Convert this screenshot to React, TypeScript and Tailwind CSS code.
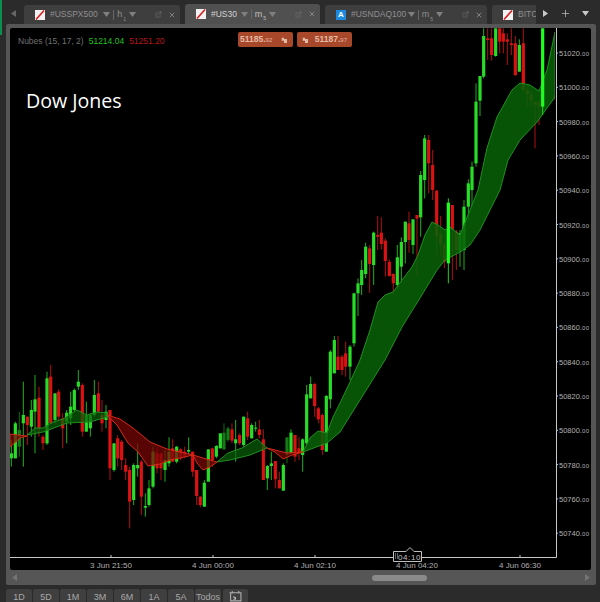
import React from "react";
import { ExternalLink, X, Plus } from "lucide-react";

type Row = [number, number, number, number, number, string];
const conv = (ox: number, oy: number, s: number, rows: Row[]) =>
  rows.map(([x, a, b, c, d, k]) => ({ x: ox + x / s, wt: oy + a / s, bt: oy + b / s, bb: oy + c / s, wb: oy + d / s, k }));

const candles = [
  ...conv(0, 360, 3, [
    [34, 240, 280, 295, 320, "G"], [46, 185, 190, 295, 295, "G"], [58, 155, 210, 260, 290, "D"], [70, 65, 165, 190, 320, "G"],
    [82, 170, 170, 195, 255, "R"], [94, 120, 150, 200, 230, "G"], [105, 45, 118, 155, 280, "G"], [117, 80, 113, 205, 230, "R"],
    [129, 225, 230, 250, 270, "R"], [141, 35, 55, 250, 255, "G"], [152, 15, 50, 190, 190, "R"], [165, 100, 100, 180, 190, "G"],
    [176, 88, 95, 170, 180, "R"], [188, 160, 175, 205, 265, "R"], [200, 150, 158, 185, 250, "G"], [212, 95, 140, 175, 195, "G"],
    [223, 85, 90, 150, 155, "G"], [235, 30, 65, 80, 90, "G"], [247, 70, 75, 215, 230, "R"], [259, 125, 165, 215, 215, "G"],
    [271, 160, 165, 205, 230, "G"], [283, 60, 105, 165, 170, "G"], [295, 65, 100, 155, 160, "R"], [306, 120, 165, 190, 215, "R"],
    [318, 135, 155, 180, 205, "G"], [330, 150, 150, 325, 360, "R"], [342, 250, 250, 330, 335, "G"], [353, 225, 235, 295, 320, "R"],
    [365, 240, 245, 300, 330, "R"], [377, 295, 315, 335, 360, "R"], [389, 320, 330, 425, 505, "R"], [401, 310, 315, 420, 435, "G"],
    [413, 250, 315, 325, 350, "G"], [424, 300, 305, 410, 465, "R"], [436, 400, 438, 443, 470, "G"], [447, 360, 385, 435, 440, "G"],
    [459, 260, 275, 380, 385, "G"], [471, 265, 280, 325, 340, "R"], [483, 280, 280, 325, 360, "R"], [495, 270, 300, 330, 365, "G"],
    [507, 232, 275, 310, 320, "G"],
  ]),
  ...conv(170, 360, 3, [
    [8, 238, 265, 305, 305, "R"], [20, 258, 260, 305, 310, "G"], [32, 265, 268, 295, 300, "R"], [44, 260, 275, 290, 295, "R"],
    [56, 232, 270, 275, 285, "G"], [68, 275, 275, 335, 350, "R"], [80, 330, 330, 408, 435, "R"], [91, 408, 410, 435, 442, "R"],
    [103, 360, 368, 440, 440, "G"], [115, 268, 268, 365, 365, "G"], [127, 263, 265, 300, 320, "R"], [139, 255, 258, 290, 295, "G"],
    [151, 220, 220, 265, 265, "G"], [162, 190, 218, 268, 270, "D"], [174, 200, 205, 240, 245, "D"], [186, 190, 208, 242, 250, "R"],
    [197, 180, 238, 250, 305, "G"], [209, 220, 225, 250, 255, "R"], [221, 170, 170, 255, 260, "G"], [233, 155, 175, 230, 240, "R"],
    [245, 190, 195, 235, 235, "G"], [257, 185, 203, 205, 215, "G"], [268, 180, 208, 225, 235, "R"], [280, 208, 238, 360, 360, "R"],
    [292, 315, 318, 355, 390, "G"], [304, 275, 310, 318, 360, "G"], [316, 303, 303, 358, 385, "R"], [328, 335, 360, 385, 385, "R"],
    [340, 310, 315, 392, 392, "G"], [351, 232, 232, 285, 310, "D"], [363, 208, 218, 280, 280, "G"], [375, 225, 225, 290, 305, "R"],
    [387, 232, 265, 280, 300, "R"], [398, 235, 238, 285, 335, "G"], [410, 75, 103, 250, 255, "G"], [422, 50, 72, 115, 115, "G"],
    [434, 68, 72, 138, 170, "R"], [445, 140, 145, 178, 190, "R"], [457, 160, 165, 270, 285, "R"], [469, 105, 108, 275, 275, "G"],
    [481, -30, -25, 118, 145, "G"], [493, -72, -60, 40, 40, "G"], [504, -72, -10, 30, 30, "R"],
  ]),
  ...conv(330, 180, 3, [
    [36, 525, 530, 570, 585, "R"], [47, 485, 520, 560, 590, "R"], [60, 495, 500, 560, 600, "G"], [72, 338, 340, 490, 500, "G"],
    [84, 295, 310, 340, 408, "G"], [95, 240, 270, 315, 345, "G"], [107, 188, 200, 282, 295, "G"], [119, 195, 205, 252, 338, "R"],
    [131, 155, 158, 255, 315, "G"], [143, 108, 165, 170, 210, "R"], [154, 112, 158, 192, 208, "R"], [166, 175, 182, 243, 290, "R"],
    [178, 238, 245, 288, 290, "R"], [190, 280, 282, 310, 345, "R"], [202, 195, 232, 315, 325, "G"], [214, 172, 186, 260, 310, "G"],
    [226, 125, 125, 186, 250, "G"], [237, 95, 130, 180, 218, "R"], [249, 118, 118, 195, 222, "G"], [261, 105, 105, 116, 290, "R"],
    [272, -27, -15, 112, 170, "G"], [284, -135, -125, 0, 55, "G"], [296, -135, -120, -50, 40, "R"], [308, -90, -45, 30, 60, "R"],
    [320, 30, 32, 168, 225, "R"], [332, 108, 162, 190, 225, "R"], [343, 190, 192, 245, 265, "R"], [355, 55, 68, 250, 310, "B"],
    [367, 75, 75, 150, 300, "R"], [379, 150, 155, 210, 270, "R"], [390, 150, 160, 215, 260, "G"],
  ]),
  ...conv(440, 20, 3, [
    [72, 540, 560, 690, 750, "G"], [85, 478, 490, 560, 600, "G"], [96, 425, 440, 510, 560, "G"], [108, 190, 245, 430, 440, "G"],
    [120, 168, 168, 242, 288, "G"], [131, 25, 48, 170, 175, "G"], [143, 25, 55, 60, 120, "R"], [155, 25, 55, 105, 122, "R"],
    [167, 25, 25, 108, 110, "G"], [179, 25, 25, 65, 100, "R"], [190, 25, 40, 65, 100, "R"], [202, 40, 58, 65, 135, "R"],
    [214, 25, 70, 75, 105, "R"], [226, 48, 70, 165, 168, "R"], [238, 58, 75, 155, 155, "G"], [250, 25, 70, 210, 215, "R"],
    [262, 200, 212, 222, 260, "R"], [273, 212, 225, 242, 262, "R"], [285, 245, 245, 255, 385, "R"], [297, 245, 245, 258, 315, "R"],
    [308, 25, 25, 260, 285, "B"], [345, 225, 228, 235, 240, "R"],
  ]),
];

const colors: Record<string, [string, string]> = {
  G: ["#28dc28", "#1cb01c"],
  D: ["#147a14", "#0f6a0f"],
  B: ["#1fff1f", "#1fd01f"],
  R: ["#dc1212", "#b01010"],
};

const band = (upper: number[][], lower: number[][]) =>
  [...upper, ...[...lower].reverse()].map((p) => p.join(",")).join(" ");

const greenBands = [
  band(
    [[27, 435], [35, 428], [43, 428], [53, 422], [63, 419], [77, 410], [87, 415], [97, 412], [107, 413]],
    [[27, 435], [43, 432], [67, 423], [90, 422], [107, 417]]
  ),
  band(
    [[217, 462], [228, 453], [242, 448], [257, 439], [267, 448]],
    [[217, 462], [230, 460], [250, 455], [267, 448]]
  ),
  band(
    [[303, 452], [310, 438], [318, 431], [327, 433], [333, 417], [340, 403], [350, 382], [360, 360], [370, 330], [378, 302], [385, 295], [393, 292], [402, 280], [412, 267], [418, 255], [425, 235], [432, 222], [438, 225], [445, 230], [450, 227], [460, 235], [468, 215], [478, 190], [487, 148], [497, 117], [512, 90], [520, 83], [530, 85], [539, 91], [547, 70], [555, 32]],
    [[303, 452], [327, 443], [340, 432], [360, 400], [385, 360], [402, 327], [420, 298], [437, 270], [445, 260], [460, 252], [470, 245], [480, 230], [490, 210], [500, 190], [508, 160], [520, 140], [537, 122], [555, 97]]
  ),
];
const redBands = [
  band([[10, 434], [27, 436]], [[10, 447], [20, 438], [27, 436]]),
  band(
    [[107, 415], [120, 419], [133, 428], [150, 442], [167, 449], [193, 455], [203, 458], [217, 462]],
    [[107, 415], [117, 425], [128, 443], [138, 452], [148, 466], [160, 464], [170, 460], [180, 458], [193, 455], [197, 463], [203, 470], [210, 467], [217, 462]]
  ),
  band(
    [[267, 448], [287, 453], [303, 452]],
    [[267, 448], [275, 452], [283, 459], [292, 455], [303, 452]]
  ),
];

const prices = [51020, 51000, 50980, 50960, 50940, 50920, 50900, 50880, 50860, 50840, 50820, 50800, 50780, 50760, 50740];
const times: [number, string][] = [[111, "3 Jun 21:50"], [213, "4 Jun 00:00"], [315, "4 Jun 02:10"], [417, "4 Jun 04:20"], [520, "4 Jun 06:30"]];

function Candle({ c }: { c: (typeof candles)[number] }) {
  return (
    <g>
      <line x1={c.x} x2={c.x} y1={c.wt} y2={c.wb} stroke={colors[c.k][1]} strokeWidth="1" />
      <rect x={c.x - 1.6} y={c.bt} width="3.2" height={Math.max(c.bb - c.bt, 1)} fill={colors[c.k][0]} />
    </g>
  );
}

function Chart() {
  return (
    <svg viewBox="10 28 581 542" className="block w-[581px] h-[542px]" style={{ fontFamily: "'Liberation Sans', sans-serif" }}>
      <defs>
        <clipPath id="plot"><rect x="10" y="28" width="545" height="529" /></clipPath>
      </defs>
      <g clipPath="url(#plot)">
        {candles.filter((c) => c.k !== "B").map((c, i) => <Candle key={i} c={c} />)}
        {greenBands.map((p, i) => (
          <polygon key={i} points={p} fill="#086008" fillOpacity={i === 2 ? 0.88 : 0.72} stroke="#1f8f1f" strokeWidth="1" />
        ))}
        {redBands.map((p, i) => (
          <polygon key={i} points={p} fill="#7a0606" fillOpacity="0.72" stroke="#d42a14" strokeWidth="1" />
        ))}
        {candles.filter((c) => c.k === "B").map((c, i) => <Candle key={i} c={c} />)}
      </g>
      <path d="M10 557.500H556.500V28" fill="none" stroke="#c8c8c8" strokeWidth="1" />
      {prices.map((p, i) => {
        const y = 53 + i * 34.3;
        return (
          <g key={p}>
            <line x1="556" x2="558" y1={y} y2={y} stroke="#c8c8c8" />
            <text x="559" y={y + 3} fontSize="7.500" fill="#b0b0b0">
              {p}.<tspan fontSize="6" letterSpacing="0.4">00</tspan>
            </text>
          </g>
        );
      })}
      {times.map(([x, t]) => (
        <g key={t}>
          <line x1={x} x2={x} y1="555" y2="557" stroke="#c8c8c8" />
          <text x={x} y="567.500" fontSize="8" fill="#b0b0b0" textAnchor="middle">{t}</text>
        </g>
      ))}
      <path d="M393.500 551.500H406L410 547.500L414 551.500H421.500V561.500H393.500Z" fill="#000" stroke="#c0c0c0" strokeWidth="1" />
      <text x="409.500" y="559.500" fontSize="8" fill="#c0c0c0" textAnchor="middle" letterSpacing="0.6">04:10</text>
      <path d="M395.500 553.500v6M397.500 553.500v6" stroke="#c0c0c0" strokeDasharray="1 1" />
    </svg>
  );
}

function Tri({ dir = "down", className = "" }: { dir?: "down" | "left" | "right"; className?: string }) {
  const pts = dir === "down" ? "0,1 7,1 3.500,6" : dir === "left" ? "6,0 6,7 1,3.500" : "1,0 1,7 6,3.500";
  return (
    <svg viewBox="0 0 7 7" className={"w-[7px] h-[7px] shrink-0 " + className} fill="currentColor">
      <polygon points={pts} />
    </svg>
  );
}

function NoIcon() {
  return (
    <svg viewBox="0 0 10 10" className="w-[10px] h-[10px] shrink-0 block">
      <rect width="10" height="10" fill="#f2f2f2" />
      <line x1="1" y1="9.500" x2="9" y2="0.500" stroke="#d81e1e" strokeWidth="1.600" />
    </svg>
  );
}

function Grip() {
  return (
    <span className="w-[4px] h-[10px] shrink-0 bg-[radial-gradient(#777_0.6px,transparent_0.7px)] bg-[length:2px_2px]" />
  );
}

function Tab({ name, tf, sub, icon, active, width, tail = true }: { name: string; tf?: string; sub?: string; icon: React.ReactNode; active?: boolean; width: string; tail?: boolean }) {
  return (
    <div className={`${width} shrink-0 rounded-t-[3px] flex items-center pl-[4px] overflow-hidden ${active ? "bg-[#505050] text-[#c0c0c0] h-[20px]" : "bg-[#3e3e3e] text-[#8e8e8e] h-[19px]"}`}>
      <Grip />
      <span className="ml-[3px]">{icon}</span>
      <span className={`ml-[5px] text-[8.5px] leading-none whitespace-nowrap ${active ? "text-[#d0d0d0]" : ""}`}>{name}</span>
      {tail && (
        <>
          <Tri className="ml-auto w-[5px] h-[5px] text-[#808080]" />
          <span className="w-px h-[10px] bg-[#666666] ml-[3px]" />
          <span className="ml-[3px] text-[9px] leading-none">{tf}</span>
          <span className="text-[5px] leading-none mt-[9px] ml-[1px]">{sub}</span>
          <Tri className="ml-[3px] mr-[19px] w-[5px] h-[5px] text-[#808080]" />
          <ExternalLink className="w-[7px] h-[7px] text-[#808080]" strokeWidth={1.5} />
          <X className="w-[8px] h-[8px] ml-[6px] mr-[4px] text-[#a0a0a0]" strokeWidth={2} />
        </>
      )}
    </div>
  );
}

function Badge({ main, dec, flip }: { main: string; dec: string; flip?: boolean }) {
  const content = [
    <span key="t" className="font-bold text-[8.5px] leading-none text-[#e2bba8]">
      {main}.<span className="text-[6px] font-normal">{dec}</span>
    </span>,
    <svg key="i" viewBox="0 0 8 8" className="w-[6px] h-[6px] text-[#e2bba8]" fill="currentColor">
      <path d="M1 1h3v1.500h4V8H4V5H1z" />
    </svg>,
  ];
  return (
    <div className={`w-[55px] h-[15px] rounded-[2px] bg-[#a8482a] flex items-center justify-between ${flip ? "pl-[5px] pr-[5px]" : "pl-[2px] pr-[6px]"}`}>
      {flip ? [...content].reverse() : content}
    </div>
  );
}

export default function App() {
  const ranges = ["1D", "5D", "1M", "3M", "6M", "1A", "5A", "Todos"];
  return (
    <div className="relative w-[600px] h-[602px] bg-[#2b2b2b] overflow-hidden flex flex-col" style={{ fontFamily: "'Liberation Sans', sans-serif" }}>
      <div className="absolute left-0 top-0 w-[2px] h-[35px] bg-[#0b8f50]" />
      <div className="h-[24px] flex items-end shrink-0 pl-[10px]">
        <Tri dir="left" className="w-[7px] h-[7px] text-[#666666] mb-[7px]" />
        <div className="flex items-end ml-[7px] gap-[5px] w-[512px] overflow-hidden">
          <Tab width="w-[156px]" name="#USSPX500" tf="h" sub="1" icon={<NoIcon />} />
          <Tab width="w-[135px]" name="#US30" tf="m" sub="5" icon={<NoIcon />} active />
          <Tab width="w-[162px]" name="#USNDAQ100" tf="m" sub="5" icon={
            <span className="w-[10px] h-[10px] bg-[#1b8ae0] text-white text-[8px] leading-[10px] font-bold text-center block">A</span>
          } />
          <Tab width="w-[45px]" name="BITC" icon={<NoIcon />} tail={false} />
        </div>
        <div className="flex items-center mb-[5px] text-[#c8c8c8]">
          <Tri dir="right" className="ml-[6px] w-[7px] h-[7px]" />
          <Plus className="w-[11px] h-[11px] ml-[11px]" strokeWidth={1.5} />
          <Tri className="ml-[11px] w-[7px] h-[7px]" />
        </div>
      </div>

      <div className="ml-[6px] w-[590px] h-[561px] shrink-0 bg-[#565656] rounded-[2px] pt-[4px] px-[4px] flex flex-col">
        <div className="relative w-[581px] h-[542px] bg-black rounded-[2px] shrink-0 overflow-hidden">
          <Chart />
          <div className="absolute left-[8px] top-[8px] flex gap-[5px] text-[8.5px] leading-[11px] whitespace-nowrap">
            <span className="text-[#707070]">Nubes (15, 17, 2)</span>
            <span className="text-[#22c022]">51214.04</span>
            <span className="text-[#b81414]">51251.20</span>
          </div>
          <div className="absolute left-[228px] top-[4px] flex gap-[4px]">
            <Badge main="51185" dec="92" />
            <Badge main="51187" dec="97" flip />
          </div>
          <div className="absolute left-[16px] top-[60px] text-white text-[19.6px] leading-[26px] whitespace-nowrap" style={{ fontFamily: "'Open Sans', sans-serif" }}>
            Dow Jones
          </div>
        </div>
        <div className="flex-1 flex items-center px-[1px] text-[#747474]">
          <Tri dir="left" className="w-[6px] h-[6px]" />
          <div className="ml-[354px] w-[55px] h-[6px] rounded-full bg-[#8a8a8a]" />
          <Tri dir="right" className="ml-auto w-[6px] h-[6px]" />
        </div>
      </div>

      <div className="flex mt-[4px] ml-[6px] items-start">
        <div className="flex gap-px">
          {ranges.map((r) => (
            <div key={r} className="w-[26px] h-[20px] bg-[#3f3f3f] rounded-t-[2px] text-[#a8a8a8] text-[9px] leading-[16px] text-center">{r}</div>
          ))}
        </div>
        <div className="ml-[2px] w-[25px] h-[20px] bg-[#3f3f3f] rounded-t-[2px] flex justify-center pt-[2px]">
          <svg viewBox="0 0 12 10" className="w-[13px] h-[11px]" fill="none" stroke="#b0b0b0" strokeWidth="1">
            <path d="M0.500 1.500h11M1.500 1.500v7.500h9.500v-7.500" />
            <path d="M3 0v2M9 0v2M4 5l2 2M4 7.500h2V5.500" />
          </svg>
        </div>
      </div>
    </div>
  );
}
